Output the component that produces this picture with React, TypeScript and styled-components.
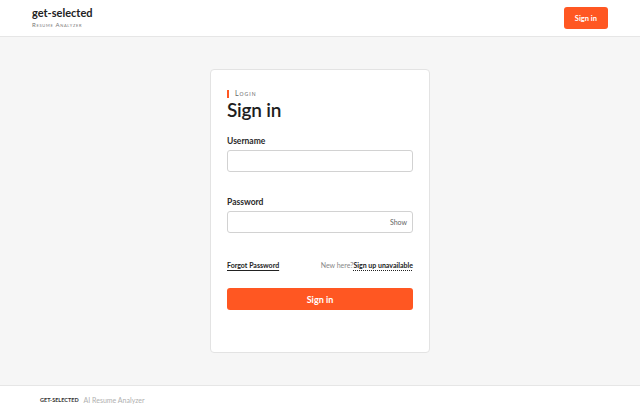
import { useState } from "react";
import styled, { createGlobalStyle } from "styled-components";

const accent = "#ff5722";

const GlobalStyle = createGlobalStyle`
  html, body {
    margin: 0;
    padding: 0;
    height: 100%;
  }
  body {
    font-family: Lato, "Noto Sans", sans-serif;
    color: #222;
    background: #f6f6f6;
  }
  #root {
    min-height: 100%;
  }
  * {
    box-sizing: border-box;
  }
`;

const Page = styled.div`
  display: flex;
  flex-flow: column;
  min-height: 414px;
`;

const Header = styled.header`
  display: flex;
  align-items: center;
  justify-content: space-between;
  height: 37px;
  padding: 0 32px;
  background: #fff;
  border-bottom: 1px solid #e6e6e6;
`;

const Brand = styled.div`
  display: flex;
  flex-flow: column;
  margin-top: -1px;

  > .name {
    font-size: 11px;
    font-weight: 700;
    line-height: 12px;
    color: #222;
  }

  > .tagline {
    margin-top: 2px;
    font-size: 6px;
    line-height: 7px;
    font-variant: small-caps;
    letter-spacing: 0.7px;
    color: #777;
  }
`;

const Button = styled.button<{ $block?: boolean }>`
  display: flex;
  align-items: center;
  justify-content: center;
  width: ${(p) => (p.$block ? "100%" : "auto")};
  height: 22px;
  padding: 0 11px;
  border: none;
  border-radius: 3px;
  background: ${accent};
  color: #fff;
  font-family: inherit;
  font-size: ${(p) => (p.$block ? "9px" : "7.5px")};
  font-weight: 700;
  cursor: pointer;
`;

const Main = styled.main`
  flex-grow: 1;
  display: flex;
  justify-content: center;
  padding: 32px 0;
`;

const Card = styled.div`
  width: 220px;
  height: 284px;
  padding: 19px 16px 16px;
  background: #fff;
  border: 1px solid #e3e3e3;
  border-radius: 4px;
  display: flex;
  flex-flow: column;
`;

const Eyebrow = styled.div`
  display: flex;
  align-items: center;
  gap: 6px;
  font-size: 7px;
  line-height: 9px;
  font-variant: small-caps;
  letter-spacing: 1px;
  color: #666;

  &::before {
    content: "";
    width: 2px;
    height: 8px;
    background: ${accent};
  }
`;

const Title = styled.h1`
  margin: 0;
  font-size: 19px;
  font-weight: 600;
  line-height: 24px;
  letter-spacing: -0.2px;
  color: #1e1e1e;
`;

const Field = styled.div<{ $top: number }>`
  display: flex;
  flex-flow: column;
  gap: 4px;
  margin-top: ${(p) => p.$top}px;
`;

const Label = styled.label`
  font-size: 8.5px;
  font-weight: 700;
  color: #2a2a2a;
`;

const InputWrap = styled.div`
  position: relative;
  display: flex;
`;

const Input = styled.input`
  width: 100%;
  height: 22px;
  padding: 0 30px 0 8px;
  border: 1px solid #d2d2d2;
  border-radius: 3px;
  font-family: inherit;
  font-size: 9px;
  outline: none;
`;

const Toggle = styled.button`
  position: absolute;
  right: 6px;
  top: 50%;
  transform: translateY(-50%);
  border: none;
  background: none;
  padding: 0;
  font-family: inherit;
  font-size: 7px;
  color: #666;
  cursor: pointer;
`;

const LinkRow = styled.div`
  display: flex;
  justify-content: space-between;
  align-items: baseline;
  margin-top: 28px;
  font-size: 7px;
`;

const Link = styled.a<{ $dotted?: boolean }>`
  font-weight: 700;
  color: #222;
  text-decoration: underline;
  text-decoration-style: ${(p) => (p.$dotted ? "dotted" : "solid")};
  text-underline-offset: 2px;
  cursor: pointer;
`;

const Muted = styled.span`
  color: #888;
`;

const Submit = styled(Button)`
  margin-top: 19px;
`;

const Footer = styled.footer`
  display: flex;
  align-items: center;
  gap: 5px;
  height: 29px;
  padding: 0 40px;
  background: #fff;
  border-top: 1px solid #e6e6e6;
  font-size: 7px;

  > .brand {
    font-size: 5.5px;
    font-weight: 700;
    letter-spacing: 0;
    text-transform: uppercase;
    color: #333;
  }

  > .tag {
    color: #b0b0b0;
  }
`;

export default function App() {
  const [show, setShow] = useState(false);

  return (
    <>
      <GlobalStyle />
      <Page>
        <Header>
          <Brand>
            <div className="name">get-selected</div>
            <div className="tagline">Resume Analyzer</div>
          </Brand>
          <Button>Sign in</Button>
        </Header>

        <Main>
          <Card>
            <Eyebrow>Login</Eyebrow>
            <Title>Sign in</Title>

            <Field $top={14}>
              <Label htmlFor="username">Username</Label>
              <Input id="username" />
            </Field>

            <Field $top={25}>
              <Label htmlFor="password">Password</Label>
              <InputWrap>
                <Input id="password" type={show ? "text" : "password"} />
                <Toggle onClick={() => setShow(!show)}>{show ? "Hide" : "Show"}</Toggle>
              </InputWrap>
            </Field>

            <LinkRow>
              <Link>Forgot Password</Link>
              <span>
                <Muted>New here?</Muted>
                <Link $dotted>Sign up unavailable</Link>
              </span>
            </LinkRow>

            <Submit $block>Sign in</Submit>
          </Card>
        </Main>

        <Footer>
          <span className="brand">get-selected</span>
          <span className="tag">AI Resume Analyzer</span>
        </Footer>
      </Page>
    </>
  );
}
